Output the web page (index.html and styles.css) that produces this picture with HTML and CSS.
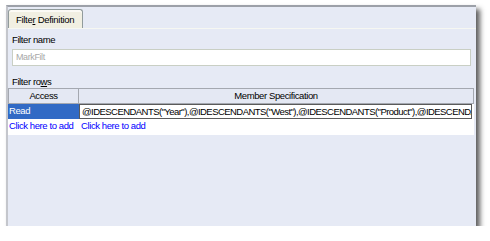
FILE: index.html
```html
<!DOCTYPE html>
<html>
<head>
<meta charset="utf-8">
<link rel="stylesheet" href="styles.css">
</head>
<body>
<div class="window">
  <div class="tabstrip">
    <div class="tab">Filte<u>r</u> Definition</div>
  </div>
  <div class="content">
    <div class="label">Filter name</div>
    <div class="input">MarkFilt</div>
    <div class="label rows-label">Filter ro<u>w</u>s</div>
  </div>
  <div class="table">
    <div class="row header">
      <div class="cell c1">Access</div>
      <div class="cell c2">Member Specification</div>
    </div>
    <div class="row data">
      <div class="cell c1 selected">Read</div>
      <div class="cell c2 focus">@IDESCENDANTS("Year"),@IDESCENDANTS("West"),@IDESCENDANTS("Product"),@IDESCENDANTS("Market")</div>
    </div>
    <div class="row add">
      <div class="cell c1 link">Click here to add</div>
      <div class="cell c2 link">Click here to add</div>
    </div>
  </div>
</div>
</body>
</html>
```

FILE: styles.css
```css
html, body {
  margin: 0;
  padding: 0;
  background: #ffffff;
}
body {
  font-family: "Liberation Sans", Arial, sans-serif;
  font-size: 9.5px;
  letter-spacing: -0.4px;
  color: #000;
}
.window {
  margin: 5px 0 0 6px;
  width: 468px;
  height: 219px;
  background: #e6eaf5;
  border-top: 2px solid #9ca0a8;
  border-left: 2px solid #c4c6cc;
  box-shadow: 4px 4px 5px rgba(40, 40, 40, 0.75);
  overflow: hidden;
}
.tabstrip {
  box-sizing: border-box;
  height: 22px;
  border-bottom: 1px solid #f6f7f2;
  display: flex;
  align-items: flex-end;
}
.tab {
  background: #f1efe2;
  border: 1px solid #919b9c;
  border-bottom: none;
  border-radius: 3px 3px 0 0;
  height: 19px;
  box-sizing: border-box;
  padding: 3px 8px 0 7px;
  line-height: 13px;
  letter-spacing: -0.3px;
  box-shadow: inset 0 2px 0 #fbfaf5;
}
.content {
  padding: 4px 4px 0 4px;
}
.label {
  height: 13px;
  line-height: 13px;
}
.input {
  margin-top: 3px;
  width: 459px;
  height: 17px;
  box-sizing: border-box;
  background: #fff;
  border: 1px solid #c9cfc4;
  color: #a8a8a8;
  font-size: 9px;
  line-height: 15px;
  padding-left: 3px;
}
.rows-label {
  margin-top: 9px;
}
.table {
  margin-top: 0;
  background: #fff;
  width: 466px;
  padding-bottom: 1px;
}
.row {
  display: flex;
  height: 15px;
}
.cell {
  box-sizing: border-box;
  white-space: nowrap;
  overflow: hidden;
  line-height: 14px;
}
.c1 {
  width: 71px;
  flex: none;
}
.c2 {
  flex: 1;
  min-width: 0;
}
.header {
  height: 16px;
}
.header .cell {
  background: #e4e8f3;
  border-top: 1px solid #a4a8b0;
  border-bottom: 1px solid #a4a8b0;
  border-right: 1px solid #a4a8b0;
  text-align: center;
  line-height: 14px;
}
.header .c1 {
  border-left: 1px solid #a4a8b0;
}
.selected {
  background: #316ac5;
  color: #fff;
  padding-left: 1px;
}
.focus {
  border: 1px solid #5a5a5a;
  margin-right: 2px;
  padding-left: 2px;
  line-height: 13px;
  letter-spacing: -0.55px;
}
.link {
  color: #0000ff;
  padding-left: 1px;
}
.add .c2 {
  padding-left: 2px;
}
```
